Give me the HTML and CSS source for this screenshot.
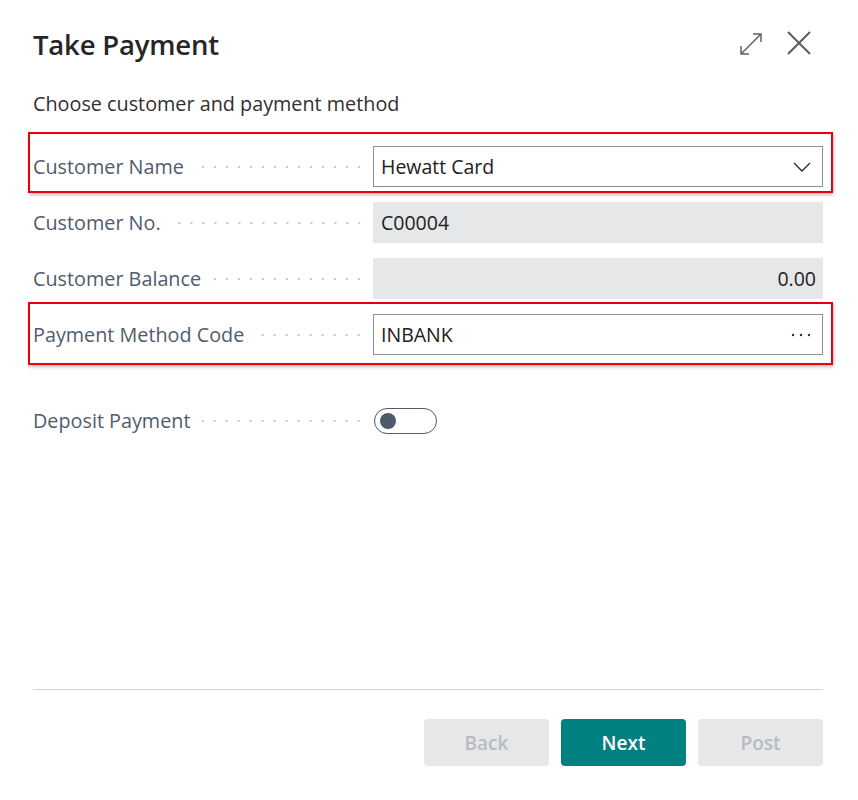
FILE: index.html
```html
<!DOCTYPE html>
<html lang="en">
<head>
<meta charset="utf-8">
<title>Take Payment</title>
<link rel="stylesheet" href="styles.css">
</head>
<body>
<div class="dialog">
  <header class="head">
    <h1 class="title">Take Payment</h1>
    <div class="actions">
      <button class="icon-btn expand" aria-label="Expand">
        <svg width="22" height="22" viewBox="0 0 22 22"><path d="M1 21 L21 1 M13 1 H21 V9 M1 13 V21 H9" fill="none" stroke="#616161" stroke-width="1.5"/></svg>
      </button>
      <button class="icon-btn close" aria-label="Close">
        <svg width="24" height="24" viewBox="0 0 24 24"><path d="M1 1 L23 23 M23 1 L1 23" fill="none" stroke="#5c5c5c" stroke-width="2"/></svg>
      </button>
    </div>
  </header>

  <p class="subtitle">Choose customer and payment method</p>

  <div class="fields">
    <div class="row hl hl-a">
      <div class="label"><span>Customer Name</span><i class="dots"></i></div>
      <div class="control edit">
        <span class="val">Hewatt Card</span>
        <svg class="chev" width="18" height="10" viewBox="0 0 18 10"><path d="M1 1 L9 9 L17 1" fill="none" stroke="#2a2a2a" stroke-width="1.3"/></svg>
      </div>
    </div>
    <div class="row">
      <div class="label"><span>Customer No.</span><i class="dots"></i></div>
      <div class="control ro"><span class="val">C00004</span></div>
    </div>
    <div class="row">
      <div class="label"><span>Customer Balance</span><i class="dots"></i></div>
      <div class="control ro num"><span class="val">0.00</span></div>
    </div>
    <div class="row hl hl-b">
      <div class="label"><span>Payment Method Code</span><i class="dots"></i></div>
      <div class="control edit">
        <span class="val">INBANK</span>
        <svg class="more" width="20" height="4" viewBox="0 0 20 4"><circle cx="2" cy="2" r="1.2" fill="#333"/><circle cx="10" cy="2" r="1.2" fill="#333"/><circle cx="18" cy="2" r="1.2" fill="#333"/></svg>
      </div>
    </div>
    <div class="row toggle-row">
      <div class="label"><span>Deposit Payment</span><i class="dots"></i></div>
      <div class="toggle-wrap"><span class="toggle"><span class="knob"></span></span></div>
    </div>
  </div>

  <footer class="foot">
    <div class="btns">
      <button class="btn disabled">Back</button>
      <button class="btn primary">Next</button>
      <button class="btn disabled">Post</button>
    </div>
  </footer>
</div>
</body>
</html>
```

FILE: styles.css
```css
* { box-sizing: border-box; }
html, body { margin: 0; padding: 0; background: #fff; }
body {
  font-family: "Open Sans", "Noto Sans", sans-serif;
  color: #212121;
}
.dialog {
  height: 800px;
  padding: 0 35px 34px 33px;
  display: flex;
  flex-direction: column;
}
.head {
  display: flex;
  align-items: flex-start;
  justify-content: space-between;
  padding-top: 26px;
}
.title {
  margin: 0;
  font-size: 27.5px;
  font-weight: 600;
  line-height: 38px;
  color: #262626;
  letter-spacing: -0.2px;
}
.actions {
  display: flex;
  gap: 25px;
  padding-top: 5px;
  margin-right: 12px;
}
.icon-btn {
  border: 0;
  background: none;
  padding: 0;
  display: block;
  cursor: pointer;
}
.icon-btn svg { display: block; }
.expand { margin-top: 1px; }
.subtitle {
  margin: 27px 0 0;
  font-size: 19.8px;
  line-height: 26px;
  color: #303030;
}
.fields {
  margin-top: 29px;
  display: flex;
  flex-direction: column;
  gap: 15px;
}
.row {
  display: grid;
  grid-template-columns: 340px 1fr;
  align-items: center;
  height: 41px;
  position: relative;
}
.hl::before {
  content: "";
  position: absolute;
  left: -5px;
  right: -10px;
  border: 2px solid #e8000b;
  box-shadow: 1px 2px 3px rgba(0,0,0,0.25);
  pointer-events: none;
}
.hl-a::before { top: -14px; bottom: -6px; }
.hl-b::before { top: -12px; bottom: -10px; }
.label {
  display: flex;
  align-items: center;
  font-size: 19.8px;
  color: #505c6d;
  padding-right: 13px;
}
.label span { white-space: nowrap; }
.dots {
  flex: 1;
  height: 4px;
  margin-left: 12px;
  background-image: radial-gradient(circle, #c4c6c9 1px, transparent 1.3px);
  background-size: 12px 4px;
  background-position: right -5px center;
  background-repeat: repeat-x;
}
.control {
  height: 41px;
  display: flex;
  align-items: center;
  justify-content: space-between;
  padding: 0 10px 0 7px;
  font-size: 19.5px;
  color: #212121;
}
.edit { border: 1px solid #8b929b; background: #fff; }
.ro { background: #e6e7e8; padding-left: 8px; }
.num { justify-content: flex-end; padding-right: 7px; }
.chev { display: block; margin-right: 1px; }
.more { display: block; margin-right: 1px; }
.toggle-row { margin-top: 30px; }
.toggle-wrap { display: flex; align-items: center; padding-left: 1px; }
.toggle {
  width: 63px;
  height: 26px;
  border: 1.5px solid #4f5a6b;
  border-radius: 13px;
  display: flex;
  align-items: center;
  padding-left: 5px;
}
.knob {
  width: 16px;
  height: 16px;
  border-radius: 50%;
  background: #4f5a6b;
}
.foot {
  margin-top: auto;
  border-top: 1px solid #d2d2d2;
  padding-top: 29px;
}
.btns {
  display: flex;
  justify-content: flex-end;
  gap: 12px;
}
.btn {
  width: 125px;
  height: 47px;
  border: 0;
  border-radius: 4px;
  font-family: inherit;
  font-size: 19px;
  font-weight: 600;
  padding: 0;
}
.disabled { background: #e6e7e8; color: #b7bbc0; }
.primary { background: #008080; color: #fff; }
```
